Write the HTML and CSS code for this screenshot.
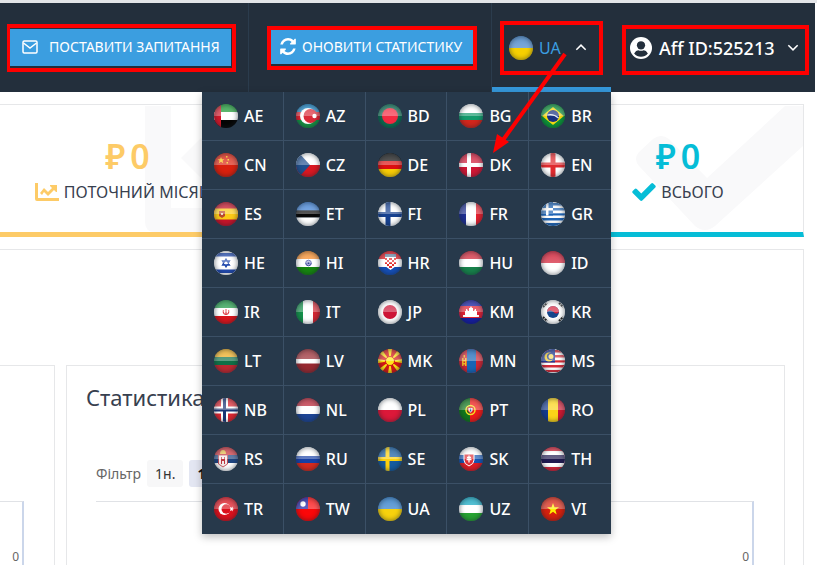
FILE: index.html
```html
<!DOCTYPE html>
<html lang="uk">
<head>
<meta charset="utf-8">
<title>Партнерський кабінет</title>
<link rel="stylesheet" href="styles.css">
</head>
<body>
<header class="topbar">
  <div class="cell cell-ask">
    <div class="mark mark-ask">
      <button class="action" type="button">
        <svg class="ico-mail" viewBox="0 0 16 14"><rect x="1" y="1" width="14" height="12" rx="1.2"/><path d="M1.5 3l6.5 5 6.500-5"/></svg>
        ПОСТАВИТИ ЗАПИТАННЯ
      </button>
    </div>
  </div>
  <div class="cell cell-refresh">
    <div class="mark mark-refresh">
      <button class="action action-tight" type="button">
        <svg class="ico-refresh" viewBox="0 0 1536 1664"><path d="M1511 1056q0 5-1 7-64 268-268 434.500T764 1664q-146 0-282.500-55T238 1452l-129 129q-19 19-45 19t-45-19-19-45v-448q0-26 19-45t45-19h448q26 0 45 19t19 45-19 45l-137 137q71 66 161 102t187 36q134 0 250-65t186-179q11-17 53-117 8-23 30-23h192q13 0 22.500 9.500t9.500 22.500zm25-928v448q0 26-19 45t-45 19h-448q-26 0-45-19t-19-45 19-45l138-138Q969 256 768 256q-134 0-250 65T332 500q-11 17-53 117-8 23-30 23H50q-13 0-22.500-9.500T18 608v-7q65-268 270-434.500T768 0q146 0 284 55.500T1297 212l130-129q19-19 45-19t45 19 19 45z"/></svg>
        ОНОВИТИ СТАТИСТИКУ
      </button>
    </div>
  </div>
  <div class="cell cell-lang">
    <div class="mark mark-lang">
      <button class="lang" type="button" aria-expanded="true">
        <span class="flag"><svg viewBox="0 0 24 24"><path fill="#3f7fc4" d="M0 0h24v12H0z"/><path fill="#f7d000" d="M0 12h24v12H0z"/></svg></span>
        UA
        <svg class="chev" viewBox="0 0 10 6"><path d="M1 5l4-4 4 4"/></svg>
      </button>
    </div>
    <ul class="menu">
      <li><a href="#"><span class="flag"><svg viewBox="0 0 24 24"><path fill="#1d9a35" d="M0 0h24v8H0z"/><path fill="#fff" d="M0 8h24v8H0z"/><path fill="#050505" d="M0 16h24v8H0z"/><path fill="#d3172a" d="M0 0h7v24H0z"/></svg></span>AE</a></li>
      <li><a href="#"><span class="flag"><svg viewBox="0 0 24 24"><path fill="#1c86c6" d="M0 0h24v8H0z"/><path fill="#e0202e" d="M0 8h24v8H0z"/><path fill="#159043" d="M0 16h24v8H0z"/><circle cx="12" cy="12" r="8" fill="#fff"/><circle cx="14.500" cy="12" r="7" fill="#da2a38"/><circle cx="18.500" cy="12" r="2.200" fill="#fff"/></svg></span>AZ</a></li>
      <li><a href="#"><span class="flag"><svg viewBox="0 0 24 24"><path fill="#0b6b50" d="M0 0h24v24H0z"/><circle cx="12" cy="12" r="8" fill="#f42a41"/></svg></span>BD</a></li>
      <li><a href="#"><span class="flag"><svg viewBox="0 0 24 24"><path fill="#fff" d="M0 0h24v9H0z"/><path fill="#159a6c" d="M0 9h24v7H0z"/><path fill="#d3261c" d="M0 16h24v8H0z"/></svg></span>BG</a></li>
      <li><a href="#"><span class="flag"><svg viewBox="0 0 24 24"><path fill="#0b9338" d="M0 0h24v24H0z"/><path fill="#f8dc10" d="M12 3l11 9-11 9-11-9z"/><circle cx="12" cy="12" r="6" fill="#17307f"/><path d="M6.500 11q6-1.500 11 3" fill="none" stroke="#dfe8f5" stroke-width="1.200"/></svg></span>BR</a></li>
      <li><a href="#"><span class="flag"><svg viewBox="0 0 24 24"><path fill="#d9200d" d="M0 0h24v24H0z"/><path fill="#f9c916" d="M7 4l1 2.300h2.400L8.500 7.800l.8 2.400L7 8.700l-2.200 1.500.8-2.400-2-1.500H6zM12 3h1.500v1.500H12zM13.500 6H15v1.500h-1.500zM12.500 9H14v1.500h-1.500z"/></svg></span>CN</a></li>
      <li><a href="#"><span class="flag"><svg viewBox="0 0 24 24"><path fill="#fff" d="M0 0h24v12H0z"/><path fill="#d91822" d="M0 12h24v12H0z"/><path fill="#21508f" d="M0 0h3l11 12L3 24H0z"/></svg></span>CZ</a></li>
      <li><a href="#"><span class="flag"><svg viewBox="0 0 24 24"><path fill="#111" d="M0 0h24v8H0z"/><path fill="#dc0e10" d="M0 8h24v8H0z"/><path fill="#f8cc05" d="M0 16h24v8H0z"/></svg></span>DE</a></li>
      <li><a href="#"><span class="flag"><svg viewBox="0 0 24 24"><path fill="#cf1735" d="M0 0h24v24H0z"/><path fill="#fff" d="M8 0h4v24H8zM0 10h24v4H0z"/></svg></span>DK</a></li>
      <li><a href="#"><span class="flag"><svg viewBox="0 0 24 24"><path fill="#fff" d="M0 0h24v24H0z"/><path fill="#df2a2e" d="M9.500 0h5v24h-5zM0 9.500h24v5H0z"/></svg></span>EN</a></li>
      <li><a href="#"><span class="flag"><svg viewBox="0 0 24 24"><path fill="#c5142a" d="M0 0h24v24H0z"/><path fill="#fbc916" d="M0 6.500h24v11H0z"/><path fill="#b9472d" d="M5 9h6v5l-3 2-3-2z"/><path fill="#e7d5c0" d="M7 11h2v2H7z"/></svg></span>ES</a></li>
      <li><a href="#"><span class="flag"><svg viewBox="0 0 24 24"><path fill="#3d7fd2" d="M0 0h24v8.500H0z"/><path fill="#080808" d="M0 8.500h24v7H0z"/><path fill="#fff" d="M0 15.500h24V24H0z"/></svg></span>ET</a></li>
      <li><a href="#"><span class="flag"><svg viewBox="0 0 24 24"><path fill="#fff" d="M0 0h24v24H0z"/><path fill="#17418f" d="M7.500 0h5v24h-5zM0 10h24v5H0z"/></svg></span>FI</a></li>
      <li><a href="#"><span class="flag"><svg viewBox="0 0 24 24"><path fill="#1f2f91" d="M0 0h7v24H0z"/><path fill="#fff" d="M7 0h10v24H7z"/><path fill="#e3202e" d="M17 0h7v24h-7z"/></svg></span>FR</a></li>
      <li><a href="#"><span class="flag"><svg viewBox="0 0 24 24"><path fill="#fff" d="M0 0h24v24H0z"/><path fill="#2065b5" d="M0 1h24v2.500H0zM0 6h24v2.500H0zM0 11h24v2.500H0zM0 16h24v2.500H0zM0 21h24v3H0z"/><path fill="#2065b5" d="M0 0h12v13.500H0z"/><path fill="#fff" d="M5 0h2.500v13.500H5zM0 6h12v2.500H0z"/></svg></span>GR</a></li>
      <li><a href="#"><span class="flag"><svg viewBox="0 0 24 24"><path fill="#fff" d="M0 0h24v24H0z"/><path fill="#2149ad" d="M0 2h24v3.500H0zM0 18.500h24V22H0z"/><path fill="none" stroke="#2149ad" stroke-width="1.300" d="M12 8l3.500 6h-7zM12 16l-3.500-6h7z"/></svg></span>HE</a></li>
      <li><a href="#"><span class="flag"><svg viewBox="0 0 24 24"><path fill="#f58a27" d="M0 0h24v8H0z"/><path fill="#fff" d="M0 8h24v8H0z"/><path fill="#16860f" d="M0 16h24v8H0z"/><circle cx="12.500" cy="12" r="2.800" fill="#a8acd9" stroke="#4249a1"/><circle cx="12.500" cy="12" r="1" fill="#303990"/></svg></span>HI</a></li>
      <li><a href="#"><span class="flag"><svg viewBox="0 0 24 24"><path fill="#e1121d" d="M0 0h24v8H0z"/><path fill="#fff" d="M0 8h24v8H0z"/><path fill="#154fb7" d="M0 16h24v8H0z"/><path fill="#fff" d="M7 6h11v9l-5.500 4L7 15z"/><path fill="#e03030" d="M7 7h2v2H7zM11 7h3v2h-3zM16 7h2v2h-2zM9 9h2v2H9zM14 9h2v2h-2zM7 11h2v2H7zM11 11h3v2h-3zM16 11h2v2h-2zM9 13h2v2H9zM14 13h2v2h-2zM11 15h3v2h-3z"/><path fill="#6b8ba9" d="M7 3h11v3H7z"/></svg></span>HR</a></li>
      <li><a href="#"><span class="flag"><svg viewBox="0 0 24 24"><path fill="#ce2538" d="M0 0h24v8H0z"/><path fill="#fff" d="M0 8h24v8H0z"/><path fill="#17814a" d="M0 16h24v8H0z"/></svg></span>HU</a></li>
      <li><a href="#"><span class="flag"><svg viewBox="0 0 24 24"><path fill="#d0142c" d="M0 0h24v12H0z"/><path fill="#fff" d="M0 12h24v12H0z"/></svg></span>ID</a></li>
      <li><a href="#"><span class="flag"><svg viewBox="0 0 24 24"><path fill="#1d9744" d="M0 0h24v8H0z"/><path fill="#fff" d="M0 8h24v8H0z"/><path fill="#d9141b" d="M0 16h24v8H0z"/><path fill="none" stroke="#e0434a" stroke-width="1.300" d="M12 9v6M9.500 10q-1 3.500 2 4.500M14.500 10q1 3.500-2 4.500"/></svg></span>IR</a></li>
      <li><a href="#"><span class="flag"><svg viewBox="0 0 24 24"><path fill="#14904a" d="M0 0h7v24H0z"/><path fill="#fff" d="M7 0h10v24H7z"/><path fill="#d22633" d="M17 0h7v24h-7z"/></svg></span>IT</a></li>
      <li><a href="#"><span class="flag"><svg viewBox="0 0 24 24"><path fill="#fff" d="M0 0h24v24H0z"/><circle cx="12" cy="12" r="7" fill="#cd1536"/></svg></span>JP</a></li>
      <li><a href="#"><span class="flag"><svg viewBox="0 0 24 24"><path fill="#161da0" d="M0 0h24v24H0z"/><path fill="#e12234" d="M0 6h24v12H0z"/><path fill="#fff" d="M4 17v-2h2v-4h1V9h1l1 2h1V8h1l1-2 1 2h1v3h1l1-2h1v2h1v4h2v2z"/></svg></span>KM</a></li>
      <li><a href="#"><span class="flag"><svg viewBox="0 0 24 24"><path fill="#fff" d="M0 0h24v24H0z"/><circle cx="12" cy="12" r="6" fill="#15468c"/><path fill="#d3233d" d="M6 12a6 6 0 0 1 12 0q-2.500 3-5.500 0T6 12z"/><path stroke="#222" stroke-width="2" stroke-dasharray="2 .7" d="M2 7l4-4M18 3l4 4M2 17l4 4M18 21l4-4"/></svg></span>KR</a></li>
      <li><a href="#"><span class="flag"><svg viewBox="0 0 24 24"><path fill="#edac22" d="M0 0h24v8H0z"/><path fill="#107047" d="M0 8h24v8H0z"/><path fill="#bd2830" d="M0 16h24v8H0z"/></svg></span>LT</a></li>
      <li><a href="#"><span class="flag"><svg viewBox="0 0 24 24"><path fill="#972931" d="M0 0h24v24H0z"/><path fill="#fff" d="M0 10h24v4.500H0z"/></svg></span>LV</a></li>
      <li><a href="#"><span class="flag"><svg viewBox="0 0 24 24"><path fill="#d41614" d="M0 0h24v24H0z"/><path fill="#fadd13" d="M0 10v4l12-2zM24 10v4l-12-2zM10 0h4l-2 12zM10 24h4l-2-12zM1 4l3-3 8 11zM20 1l3 3-11 8zM1 20l3 3 8-11zM20 23l3-3-11-8z"/><circle cx="12" cy="12" r="4.500" fill="#ffe61a" stroke="#d41614"/></svg></span>MK</a></li>
      <li><a href="#"><span class="flag"><svg viewBox="0 0 24 24"><path fill="#ce2635" d="M0 0h24v24H0z"/><path fill="#1764b5" d="M8 0h9v24H8z"/><path fill="#f4bb25" d="M3 9h1.500v8H3zM6 9h1.500v8H6zM4 11h3v1.500H4zM4 14h3v1.500H4zM4.500 6h1.500v2.500H4.500z"/></svg></span>MN</a></li>
      <li><a href="#"><span class="flag"><svg viewBox="0 0 24 24"><path fill="#fff" d="M0 0h24v24H0z"/><path fill="#d52c39" d="M0 1h24v2.500H0zM0 6h24v2.500H0zM0 11h24v2.500H0zM0 16h24v2.500H0zM0 21h24v2H0z"/><path fill="#203b96" d="M0 0h14v13.500H0z"/><circle cx="8" cy="8" r="4.500" fill="#f7d02a"/><circle cx="9.500" cy="7.500" r="3.600" fill="#203b96"/><circle cx="10" cy="7.500" r="2.500" fill="#f7e06a"/></svg></span>MS</a></li>
      <li><a href="#"><span class="flag"><svg viewBox="0 0 24 24"><path fill="#db2530" d="M0 0h24v24H0z"/><path fill="#fff" d="M7 0h7v24H7zM0 8.500h24v7H0z"/><path fill="#193575" d="M9 0h3v24H9zM0 10.500h24v3H0z"/></svg></span>NB</a></li>
      <li><a href="#"><span class="flag"><svg viewBox="0 0 24 24"><path fill="#b72234" d="M0 0h24v8H0z"/><path fill="#fff" d="M0 8h24v8H0z"/><path fill="#1e4595" d="M0 16h24v8H0z"/></svg></span>NL</a></li>
      <li><a href="#"><span class="flag"><svg viewBox="0 0 24 24"><path fill="#fff" d="M0 0h24v12H0z"/><path fill="#dc1839" d="M0 12h24v12H0z"/></svg></span>PL</a></li>
      <li><a href="#"><span class="flag"><svg viewBox="0 0 24 24"><path fill="#10771c" d="M0 0h11v24H0z"/><path fill="#ef1a18" d="M11 0h13v24H11z"/><circle cx="11.500" cy="12" r="4.500" fill="none" stroke="#f5df24" stroke-width="1.500"/><path fill="#fff" stroke="#dd2522" d="M9 9.500h5v3.500l-2.500 2L9 13z"/><path fill="#2e58a3" d="M10.800 10.500h1.500v3h-1.500z"/></svg></span>PT</a></li>
      <li><a href="#"><span class="flag"><svg viewBox="0 0 24 24"><path fill="#143a8e" d="M0 0h7v24H0z"/><path fill="#fbd318" d="M7 0h10v24H7z"/><path fill="#cd1831" d="M17 0h7v24h-7z"/></svg></span>RO</a></li>
      <li><a href="#"><span class="flag"><svg viewBox="0 0 24 24"><path fill="#c9343d" d="M0 0h24v8H0z"/><path fill="#1e4580" d="M0 8h24v8H0z"/><path fill="#fff" d="M0 16h24v8H0z"/><path fill="#f3e9e9" stroke="#bc3840" stroke-width=".8" d="M4.500 8h9v9L9 20l-4.500-3z"/><path fill="#bc3840" d="M7 10h1v7H7zM10 10h1v7h-1zM8 12h2v2H8z"/><path fill="#e5bd50" d="M6 7q0-4 3-4t3 4z"/></svg></span>RS</a></li>
      <li><a href="#"><span class="flag"><svg viewBox="0 0 24 24"><path fill="#fff" d="M0 0h24v9H0z"/><path fill="#1740a5" d="M0 9h24v7H0z"/><path fill="#d62a1e" d="M0 16h24v8H0z"/></svg></span>RU</a></li>
      <li><a href="#"><span class="flag"><svg viewBox="0 0 24 24"><path fill="#155b9f" d="M0 0h24v24H0z"/><path fill="#fcd00d" d="M7.500 0h4v24h-4zM0 10h24v4H0z"/></svg></span>SE</a></li>
      <li><a href="#"><span class="flag"><svg viewBox="0 0 24 24"><path fill="#fff" d="M0 0h24v8H0z"/><path fill="#1755b2" d="M0 8h24v8H0z"/><path fill="#e01c25" d="M0 16h24v8H0z"/><path fill="#e02f37" stroke="#fff" d="M5 7h10v6q0 4-5 6-5-2-5-6z"/><path stroke="#fff" stroke-width="1.300" d="M10 8.500v7M8 10.500h4M7.500 12.500h5"/></svg></span>SK</a></li>
      <li><a href="#"><span class="flag"><svg viewBox="0 0 24 24"><path fill="#d52438" d="M0 0h24v24H0z"/><path fill="#fff" d="M0 4h24v16H0z"/><path fill="#211a50" d="M0 8h24v8H0z"/></svg></span>TH</a></li>
      <li><a href="#"><span class="flag"><svg viewBox="0 0 24 24"><path fill="#dc101c" d="M0 0h24v24H0z"/><circle cx="10.500" cy="12" r="6" fill="#fff"/><circle cx="12.200" cy="12" r="4.700" fill="#dc101c"/><path fill="#fff" d="M19 9.500l-.5 1.700 1.500.8-1.500.8.5 1.700-1.500-1.200-1.500.7.500-2-.5-2 1.500.7z"/></svg></span>TR</a></li>
      <li><a href="#"><span class="flag"><svg viewBox="0 0 24 24"><path fill="#fb0709" d="M0 0h24v24H0z"/><path fill="#15169e" d="M0 0h12v12H0z"/><circle cx="7" cy="7" r="2.700" fill="#fff"/></svg></span>TW</a></li>
      <li><a href="#"><span class="flag"><svg viewBox="0 0 24 24"><path fill="#2777c5" d="M0 0h24v12H0z"/><path fill="#f7d20d" d="M0 12h24v12H0z"/></svg></span>UA</a></li>
      <li><a href="#"><span class="flag"><svg viewBox="0 0 24 24"><path fill="#13a6c0" d="M0 0h24v8H0z"/><path fill="#fff" d="M0 8h24v8H0z"/><path fill="#27a232" d="M0 16h24v8H0z"/></svg></span>UZ</a></li>
      <li><a href="#"><span class="flag"><svg viewBox="0 0 24 24"><path fill="#d6200d" d="M0 0h24v24H0z"/><path fill="#fff000" d="M12 6l1.500 4.300h4.500l-3.600 2.700 1.300 4.500-3.700-2.700-3.700 2.700L9.600 13 6 10.300h4.500z"/></svg></span>VI</a></li>
    </ul>
    <svg class="pointer" viewBox="0 0 80 108"><path class="shaft" d="M74 6L12 92"/><path class="head" d="M2 105l4-19 12 8z"/></svg>
  </div>
  <div class="cell cell-user">
    <div class="mark mark-user">
      <button class="user" type="button">
        <svg class="ico-user" viewBox="0 0 24 24"><circle cx="12" cy="12" r="12" fill="#fff"/><circle cx="12" cy="9" r="4.500" fill="#232f3c"/><path fill="#232f3c" d="M4.500 18q2-3.500 4.500-3.500 3 1.200 6 0 2.500 0 4.500 3.500-3 3.500-7.500 3.500T4.500 18z"/></svg>
        Aff ID:525213
        <svg class="chev" viewBox="0 0 10 6"><path d="M1 1l4 4 4-4"/></svg>
      </button>
    </div>
  </div>
</header>
<main class="page">
  <div class="cards">
    <section class="card card-month">
      <svg class="ghost ghost-chart" viewBox="0 0 120 126"><path d="M0 0h26v102h94v24H10Q0 126 0 116zM36 52l20-20 24 24 40-40v50L80 96z"/></svg>
      <div class="sum">₽<span>0</span></div>
      <div class="label"><svg class="ico-chart" viewBox="0 0 24 18"><path d="M0 0h3v15h21v3H2q-2 0-2-2zM5 10l4-5 4 4 4-4-2-2V2h7v7h-1l-2-2-6 6-4-4-2 3z"/></svg>ПОТОЧНИЙ МІСЯЦЬ</div>
    </section>
    <section class="card card-total">
      <svg class="ghost ghost-check" viewBox="0 0 168 126"><path d="M4 46l14-13q8-6 16 0l38 39L150 0h18v40L80 120q-10 8-20 0L4 60q-6-7 0-14z"/></svg>
      <div class="sum">₽<span>0</span></div>
      <div class="label"><svg class="ico-check" viewBox="121 334 1550 1188"><path d="M1671 566q0 40-28 68l-724 724-136 136q-28 28-68 28t-68-28l-136-136-362-362q-28-28-28-68t28-68l136-136q28-28 68-28t68 28l294 295 656-657q28-28 68-28t68 28l136 136q28 28 28 68z"/></svg>ВСЬОГО</div>
    </section>
  </div>
  <section class="board">
    <div class="panel panel-left">
      <div class="plot"><span>0</span></div>
    </div>
    <div class="panel panel-stats">
      <h2>Статистика</h2>
      <div class="filter">
        <span>Фільтр</span>
        <button type="button">1н.</button>
        <button type="button" class="on">1м.</button>
      </div>
      <div class="plot"><span>0</span></div>
    </div>
  </section>
</main>
</body>
</html>
```
FILE: styles.css
```css
* {
  box-sizing: border-box;
}

body {
  display: flex;
  flex-direction: column;
  min-height: 100vh;
  margin: 0;
  padding-right: 2px;
  border-top: 3px solid #e3e5e8;
  background: #fff;
  color: #37404f;
  font: 16px/20px "Noto Sans", "Open Sans", sans-serif;
}

button {
  display: flex;
  align-items: center;
  margin: 0;
  padding: 0;
  border: 0;
  background: none;
  color: #fff;
  font: inherit;
  white-space: nowrap;
  cursor: pointer;
}

svg {
  display: block;
  flex: none;
}

/* Top bar */
.topbar {
  display: flex;
  height: 89px;
  background: #232f3c;
}

.cell {
  display: flex;
  align-items: center;
  border-right: 1px solid #2b3c4d;
}

.cell-ask {
  flex: 0 0 249px;
  padding-left: 7px;
}

.cell-refresh {
  flex: 0 0 243px;
  padding-left: 18px;
}

.cell-lang {
  position: relative;
  flex: 0 0 119px;
  padding: 5px 0 0 8px;
  border-right: 0;
  border-bottom: 5px solid #3598db;
}

.cell-user {
  flex: 1;
  padding: 4px 6px 0 0;
  justify-content: flex-end;
  border-right: 0;
}

.mark {
  display: flex;
  border: 4px solid #fe0000;
}

.mark-ask {
  width: 229px;
  height: 48px;
  padding: 1px 1px 2px 0;
  border-left-width: 3px;
}

.mark-refresh {
  width: 210px;
  height: 44px;
  padding-bottom: 2px;
}

.mark-lang {
  width: 103px;
  height: 54px;
}

.mark-user {
  width: 187px;
  height: 50px;
  padding-bottom: 4px;
}

.action {
  flex: 1;
  gap: 11px;
  padding-left: 12px;
  background: #3b9ee0;
  font-size: 14px;
}

.action-tight {
  gap: 6px;
  padding-left: 9px;
}

.ico-mail {
  width: 16px;
  height: 14px;
  fill: none;
  stroke: #fff;
  stroke-width: 1.5;
}

.ico-refresh {
  width: 16px;
  height: 17px;
  fill: #fff;
}

.lang {
  flex: 1;
  gap: 6px;
  padding-left: 5px;
  color: #3b9ee0;
}

.chev {
  width: 12px;
  height: 7px;
  fill: none;
  stroke: #fff;
  stroke-width: 1.3;
}

.lang .chev {
  margin-left: 8px;
}

.user {
  flex: 1;
  gap: 7px;
  padding-left: 4px;
  font-size: 18px;
  font-weight: 500;
}

.user .chev {
  margin-left: 5px;
}

.ico-user {
  width: 22px;
  height: 22px;
}

/* Language menu */
.flag {
  position: relative;
  flex: none;
  width: 24px;
  height: 24px;
  border-radius: 50%;
  overflow: hidden;
}

.flag::after {
  content: "";
  position: absolute;
  inset: 0;
  border-radius: 50%;
  background: linear-gradient(rgba(255, 255, 255, .2), rgba(255, 255, 255, .32) 48%, rgba(255, 255, 255, 0) 52%);
  box-shadow: inset 0 0 4px 1px rgba(20, 30, 40, .45);
}

.menu {
  position: absolute;
  z-index: 2;
  top: 89px;
  right: 0;
  display: grid;
  grid-template-columns: repeat(5, 1fr);
  width: 409px;
  margin: 0;
  padding: 0;
  background: #27394b;
  box-shadow: 0 3px 8px rgba(0, 0, 0, .25);
  list-style: none;
}

.menu li {
  border-right: 1px solid #3b5066;
  border-bottom: 1px solid #3b5066;
}

.menu li:nth-child(5n) {
  border-right: 0;
}

.menu li:nth-last-child(-n + 5) {
  border-bottom: 0;
}

.menu a {
  display: flex;
  align-items: center;
  gap: 6px;
  height: 48px;
  padding-left: 12px;
  color: #fff;
  font-weight: 500;
  text-decoration: none;
}

.menu li:nth-last-child(-n + 5) a {
  height: 50px;
}

.pointer {
  position: absolute;
  z-index: 3;
  top: 45px;
  left: -1px;
  width: 80px;
  height: 108px;
  pointer-events: none;
}

.shaft {
  stroke: #fe0000;
  stroke-width: 4;
}

.head {
  fill: #fe0000;
}

/* Totals */
.page {
  display: flex;
  flex: 1;
  flex-direction: column;
  gap: 12px;
  padding: 12px 11px 0 0;
}

.cards {
  display: flex;
  justify-content: space-between;
}

.card {
  position: relative;
  height: 133px;
  padding-top: 31px;
  border: 1px solid #e6e7e9;
  border-bottom: 5px solid;
  overflow: hidden;
  text-align: center;
}

.card-month {
  width: 256px;
  border-left: 0;
  border-bottom-color: #fdcb67;
  color: #fdcb67;
}

.card-total {
  width: 252px;
  border-bottom-color: #06bdd7;
  color: #06bdd7;
}

.ghost {
  position: absolute;
  top: 1px;
  fill: #f9f9fa;
}

.ghost-chart {
  left: 145px;
  width: 120px;
  height: 126px;
}

.ghost-check {
  right: 0;
  width: 168px;
  height: 126px;
}

.sum {
  display: flex;
  position: relative;
  justify-content: center;
  gap: 5px;
  height: 42px;
  font-size: 34px;
  font-weight: 600;
  line-height: 40px;
}

.label {
  display: flex;
  position: relative;
  align-items: center;
  justify-content: center;
  gap: 5px;
  height: 28px;
  color: #37404f;
  white-space: nowrap;
}

.label svg {
  width: 24px;
  height: 18px;
}

.ico-chart {
  fill: #fdcb67;
}

.ico-check {
  fill: #06bdd7;
}

/* Charts */
.board {
  display: flex;
  flex: 1;
  gap: 11px;
  padding: 115px 18px 0 0;
  border: 1px solid #e6e7e9;
  border-width: 1px 1px 0 0;
}

.panel {
  display: flex;
  flex-direction: column;
  border: 1px solid #e6e7e9;
  border-bottom: 0;
}

.panel-left {
  flex: 0 0 55px;
  padding: 135px 30px 0 0;
  border-left: 0;
}

.panel-stats {
  flex: 1;
  padding: 18px 30px 0 29px;
}

h2 {
  margin: 0 0 0 -10px;
  font-size: 22px;
  font-weight: 400;
  line-height: 26px;
}

.filter {
  display: flex;
  align-items: center;
  gap: 6px;
  margin: 50px 0 14px;
  color: #666;
  font-size: 14px;
}

.filter button {
  height: 27px;
  padding: 0 8px;
  border-radius: 3px;
  background: #f7f7f8;
  color: #333;
}

.filter .on {
  background: #e3e6f2;
  color: #111;
  font-weight: 700;
}

.plot {
  display: flex;
  flex: 1;
  align-items: flex-end;
  justify-content: flex-end;
  padding-right: 3px;
  border-top: 1px solid #e0e2e6;
  border-right: 2px solid #cbd6ea;
  color: #666;
  font-size: 12px;
  line-height: 16px;
}
```
